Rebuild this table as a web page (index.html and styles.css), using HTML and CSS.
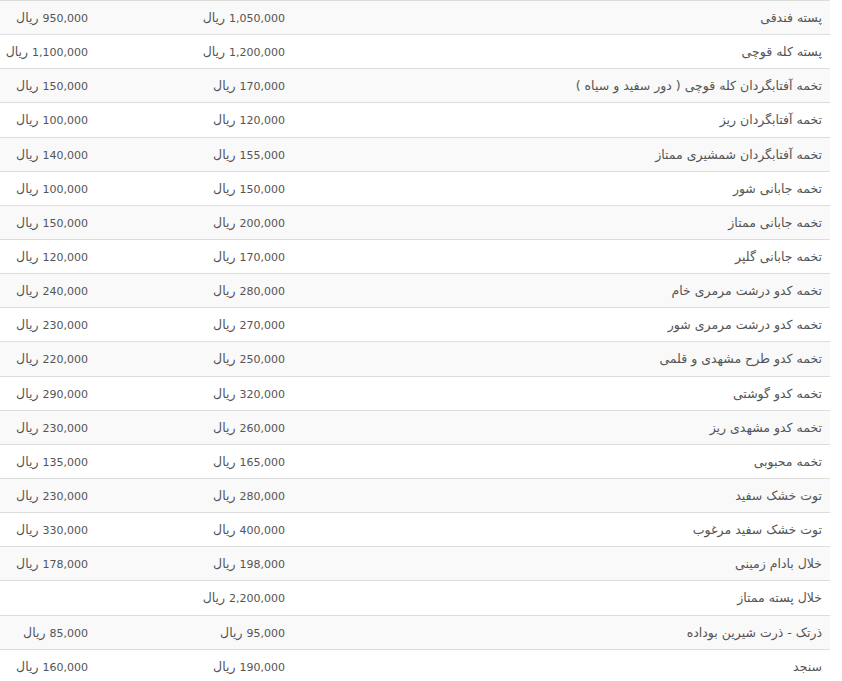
FILE: index.html
```html
<!DOCTYPE html>
<html lang="fa" dir="rtl">
<head>
<meta charset="utf-8">
<title>قیمت آجیل</title>
<link rel="stylesheet" href="styles.css">
</head>
<body>
<table class="price-table">
<colgroup>
<col class="col-name">
<col class="col-price">
<col class="col-old">
</colgroup>
<tbody>
<tr><td class="name">پسته فندقی</td><td><span class="num">1,050,000</span> <span class="unit">ریال</span></td><td><span class="num">950,000</span> <span class="unit">ریال</span></td></tr>
<tr><td class="name">پسته کله قوچی</td><td><span class="num">1,200,000</span> <span class="unit">ریال</span></td><td><span class="num">1,100,000</span> <span class="unit">ریال</span></td></tr>
<tr><td class="name">تخمه آفتابگردان کله قوچی ( دور سفید و سیاه )</td><td><span class="num">170,000</span> <span class="unit">ریال</span></td><td><span class="num">150,000</span> <span class="unit">ریال</span></td></tr>
<tr><td class="name">تخمه آفتابگردان ریز</td><td><span class="num">120,000</span> <span class="unit">ریال</span></td><td><span class="num">100,000</span> <span class="unit">ریال</span></td></tr>
<tr><td class="name">تخمه آفتابگردان شمشیری ممتاز</td><td><span class="num">155,000</span> <span class="unit">ریال</span></td><td><span class="num">140,000</span> <span class="unit">ریال</span></td></tr>
<tr><td class="name">تخمه جابانی شور</td><td><span class="num">150,000</span> <span class="unit">ریال</span></td><td><span class="num">100,000</span> <span class="unit">ریال</span></td></tr>
<tr><td class="name">تخمه جابانی ممتاز</td><td><span class="num">200,000</span> <span class="unit">ریال</span></td><td><span class="num">150,000</span> <span class="unit">ریال</span></td></tr>
<tr><td class="name">تخمه جابانی گلپر</td><td><span class="num">170,000</span> <span class="unit">ریال</span></td><td><span class="num">120,000</span> <span class="unit">ریال</span></td></tr>
<tr><td class="name">تخمه کدو درشت مرمری خام</td><td><span class="num">280,000</span> <span class="unit">ریال</span></td><td><span class="num">240,000</span> <span class="unit">ریال</span></td></tr>
<tr><td class="name">تخمه کدو درشت مرمری شور</td><td><span class="num">270,000</span> <span class="unit">ریال</span></td><td><span class="num">230,000</span> <span class="unit">ریال</span></td></tr>
<tr><td class="name">تخمه کدو طرح مشهدی و قلمی</td><td><span class="num">250,000</span> <span class="unit">ریال</span></td><td><span class="num">220,000</span> <span class="unit">ریال</span></td></tr>
<tr><td class="name">تخمه کدو گوشتی</td><td><span class="num">320,000</span> <span class="unit">ریال</span></td><td><span class="num">290,000</span> <span class="unit">ریال</span></td></tr>
<tr><td class="name">تخمه کدو مشهدی ریز</td><td><span class="num">260,000</span> <span class="unit">ریال</span></td><td><span class="num">230,000</span> <span class="unit">ریال</span></td></tr>
<tr><td class="name">تخمه محبوبی</td><td><span class="num">165,000</span> <span class="unit">ریال</span></td><td><span class="num">135,000</span> <span class="unit">ریال</span></td></tr>
<tr><td class="name">توت خشک سفید</td><td><span class="num">280,000</span> <span class="unit">ریال</span></td><td><span class="num">230,000</span> <span class="unit">ریال</span></td></tr>
<tr><td class="name">توت خشک سفید مرغوب</td><td><span class="num">400,000</span> <span class="unit">ریال</span></td><td><span class="num">330,000</span> <span class="unit">ریال</span></td></tr>
<tr><td class="name">خلال بادام زمینی</td><td><span class="num">198,000</span> <span class="unit">ریال</span></td><td><span class="num">178,000</span> <span class="unit">ریال</span></td></tr>
<tr><td class="name">خلال پسته ممتاز</td><td><span class="num">2,200,000</span> <span class="unit">ریال</span></td><td></td></tr>
<tr><td class="name">ذرتک - ذرت شیرین بوداده</td><td><span class="num">95,000</span> <span class="unit">ریال</span></td><td><span class="num">85,000</span> <span class="unit">ریال</span></td></tr>
<tr><td class="name">سنجد</td><td><span class="num">190,000</span> <span class="unit">ریال</span></td><td><span class="num">160,000</span> <span class="unit">ریال</span></td></tr>
</tbody>
</table>
</body>
</html>
```
FILE: styles.css
```css
html, body {
  margin: 0;
  padding: 0;
  background: #fff;
}
body {
  font-family: "DejaVu Sans", "Noto Sans", sans-serif;
  font-size: 12.5px;
  color: #555;
}
.price-table {
  width: 830px;
  margin-left: 0;
  margin-right: auto;
  border-collapse: collapse;
  border-spacing: 0;
  table-layout: fixed;
}
.col-name { width: 537px; }
.col-price { width: 197px; }
.col-old { width: 96px; }
.price-table td {
  padding: 8px;
  font-size: 12.5px;
  line-height: 17.14px;
  border-top: 1px solid #ddd;
  text-align: right;
  vertical-align: middle;
  white-space: nowrap;
}
.num {
  font-size: 11px;
  line-height: 1;
}
.unit {
  font-size: 12.5px;
  line-height: 1;
}
.price-table tr:nth-child(odd) td {
  background: #f9f9f9;
}
```
